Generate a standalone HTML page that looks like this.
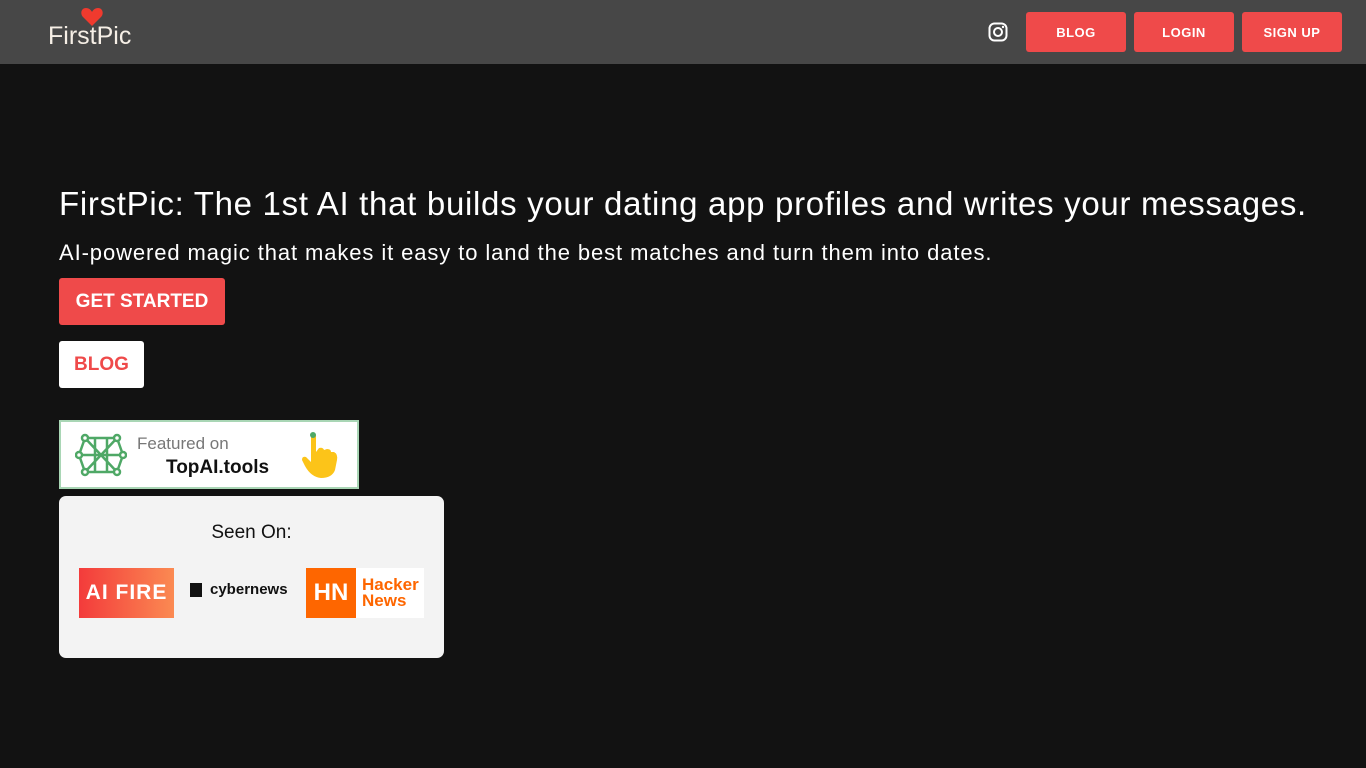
<!DOCTYPE html>
<html><head><meta charset="utf-8"><style>
*{box-sizing:border-box;margin:0;padding:0}
body{width:1366px;height:768px;background:#121212;font-family:"Liberation Sans",sans-serif;color:#fff;position:relative;overflow:hidden}
.nav{position:absolute;left:0;top:0;width:1366px;height:64px;background:#474747}
.btn{position:absolute;top:12px;height:40px;background:#ef4a4a;color:#fff;font-weight:bold;font-size:13px;display:flex;align-items:center;justify-content:center;border-radius:3px;letter-spacing:.5px}
.abs{position:absolute}
</style></head><body>
<div class="nav">
<svg class="abs" style="left:81px;top:7px" width="22" height="19" viewBox="0 0 22 19"><path d="M11 19 L2 10 C-1 7 0 1 5 1 C8 1 10 3 11 5 C12 3 14 1 17 1 C22 1 23 7 20 10 Z" fill="#f03a2e"/></svg>
<div class="abs" style="left:48px;top:22px;font-size:25px;color:#f6efe6;letter-spacing:0px">FirstPic</div>
<svg class="abs" style="left:988px;top:22px" width="20" height="20" viewBox="0 0 20 20"><rect x="1.5" y="1.5" width="17" height="17" rx="5" fill="none" stroke="#fff" stroke-width="2"/><circle cx="10" cy="10" r="4" fill="none" stroke="#fff" stroke-width="2"/><circle cx="15" cy="5" r="1.2" fill="#fff"/></svg>
<div class="btn" style="left:1026px;width:100px">BLOG</div>
<div class="btn" style="left:1134px;width:100px">LOGIN</div>
<div class="btn" style="left:1242px;width:100px">SIGN UP</div>
</div>
<div class="abs" style="left:59px;top:185px;font-size:33px;white-space:nowrap;letter-spacing:0.7px">FirstPic: The 1st AI that builds your dating app profiles and writes your messages.</div>
<div class="abs" style="left:59px;top:240px;font-size:22px;white-space:nowrap;letter-spacing:0.9px">AI-powered magic that makes it easy to land the best matches and turn them into dates.</div>
<div class="abs" style="left:59px;top:278px;width:166px;height:47px;background:#ef4a4a;border-radius:3px;font-weight:bold;font-size:19px;display:flex;align-items:center;justify-content:center">GET STARTED</div>
<div class="abs" style="left:59px;top:341px;width:85px;height:47px;background:#fff;color:#ef4a4a;border-radius:3px;font-weight:bold;font-size:19px;display:flex;align-items:center;justify-content:center">BLOG</div>
<div class="abs" style="left:59px;top:420px;width:300px;height:69px;background:#fff;border:2px solid #a9d6b5">
<svg class="abs" style="left:14px;top:8px" width="52" height="50" viewBox="0 0 52 50" fill="none" stroke="#4fa866" stroke-width="2.5"><path d="M10 8 L26 8 L42 8 M4 25 L48 25 M10 42 L42 42 M10 8 L4 25 L10 42 M42 8 L48 25 L42 42 M10 8 L42 42 M42 8 L10 42 M20 8 L20 42 M32 8 L32 42"/><circle cx="10" cy="8" r="3" fill="#fff"/><circle cx="42" cy="8" r="3" fill="#fff"/><circle cx="10" cy="42" r="3" fill="#fff"/><circle cx="42" cy="42" r="3" fill="#fff"/><circle cx="4" cy="25" r="3" fill="#fff"/><circle cx="48" cy="25" r="3" fill="#fff"/></svg>
<div class="abs" style="left:76px;top:12px;font-size:17px;color:#777">Featured on</div>
<div class="abs" style="left:105px;top:35px;font-size:19px;color:#111;font-weight:bold">TopAI.tools</div>
<svg class="abs" style="left:238px;top:8px" width="42" height="50" viewBox="0 0 42 50"><path d="M12 4 Q16 2 17 6 L17 22 L20 18 Q24 17 25 20 L28 19 Q32 19 32 22 L35 22 Q39 24 38 30 L36 40 Q33 48 22 48 Q12 47 6 36 L3 30 Q3 26 7 27 L12 32 Z" fill="#fcc419"/><circle cx="14" cy="5" r="3" fill="#4fa866"/></svg>
</div>
<div class="abs" style="left:59px;top:496px;width:385px;height:162px;background:#f3f3f3;border-radius:7px">
<div class="abs" style="left:0;width:385px;top:26px;text-align:center;color:#111;font-size:19px">Seen On:</div>
<div class="abs" style="left:20px;top:72px;width:95px;height:50px;background:linear-gradient(90deg,#f33b3b,#fb8a52);color:#fff;font-weight:bold;font-size:21px;display:flex;align-items:center;justify-content:center;letter-spacing:1px">AI FIRE</div>
<div class="abs" style="left:131px;top:87px;width:12px;height:14px;background:#111"></div>
<div class="abs" style="left:151px;top:85px;color:#111;font-weight:bold;font-size:15px">cybernews</div>
<div class="abs" style="left:247px;top:72px;width:50px;height:50px;background:#fe6600;color:#fff;font-weight:bold;font-size:24px;display:flex;align-items:center;justify-content:center">HN</div>
<div class="abs" style="left:297px;top:72px;width:68px;height:50px;background:#fff;color:#fe6600;font-size:17px;line-height:16px;padding:9px 0 0 6px;font-weight:bold">Hacker<br>News</div>
</div>
</body></html>
